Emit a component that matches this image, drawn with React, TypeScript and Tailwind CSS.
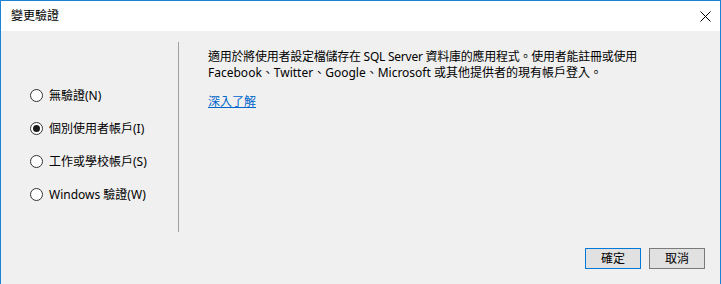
const font = {
  fontFamily: '"Segoe UI", "Noto Sans", "Noto Sans CJK TC", sans-serif',
};

const Radio = ({ label, checked }: { label: string; checked?: boolean }) => (
  <div className="flex h-[33px] items-center gap-[6px]">
    <span className="flex h-[13px] w-[13px] items-center justify-center rounded-full border border-[#333333] bg-white">
      {checked && <span className="h-[7px] w-[7px] rounded-full bg-[#1a1a1a]" />}
    </span>
    <span className="text-[12px] leading-4 text-black">{label}</span>
  </div>
);

export default function App() {
  return (
    <div
      className="flex h-[284px] w-[721px] flex-col overflow-hidden border-x border-t border-[#1883d7] bg-[#f0f0f0]"
      style={font}
    >
      {/* Title bar */}
      <div className="flex h-[30px] shrink-0 items-center justify-between bg-white pl-[10px] pr-[9px]">
        <span className="text-[12px] leading-4 text-black">變更驗證</span>
        <svg width="11" height="11" viewBox="0 0 11 11">
          <path d="M0.5 0.5 L10.5 10.5 M10.5 0.5 L0.5 10.5" stroke="#000" strokeWidth="1" />
        </svg>
      </div>

      {/* Body */}
      <div className="flex flex-1 flex-col">
        <div className="flex pt-[11px]">
          <div className="h-[190px] w-[178px] shrink-0 border-r border-[#a0a0a0] pl-[29px] pt-[37px]">
            <Radio label="無驗證(N)" />
            <Radio label="個別使用者帳戶(I)" checked />
            <Radio label="工作或學校帳戶(S)" />
            <Radio label="Windows 驗證(W)" />
          </div>
          <div className="pl-[29px] pt-[7px] text-[12px] leading-4 text-black">
            <p className="tracking-[-0.25px]">
              適用於將使用者設定檔儲存在 SQL Server 資料庫的應用程式。使用者能註冊或使用
            </p>
            <p>Facebook、Twitter、Google、Microsoft 或其他提供者的現有帳戶登入。</p>
            <a href="#" className="mt-[13px] block w-fit text-[#0066cc] underline">
              深入了解
            </a>
          </div>
        </div>

        {/* Buttons */}
        <div className="mt-[16px] flex justify-end gap-[8px] pr-[15px]">
          <button className="h-[21px] w-[56px] border border-[#0078d7] bg-[#e1e1e1] text-[12px] leading-4 text-black">
            確定
          </button>
          <button className="h-[21px] w-[56px] border border-[#7a7a7a] bg-[#e1e1e1] text-[12px] leading-4 text-black">
            取消
          </button>
        </div>
      </div>
    </div>
  );
}
